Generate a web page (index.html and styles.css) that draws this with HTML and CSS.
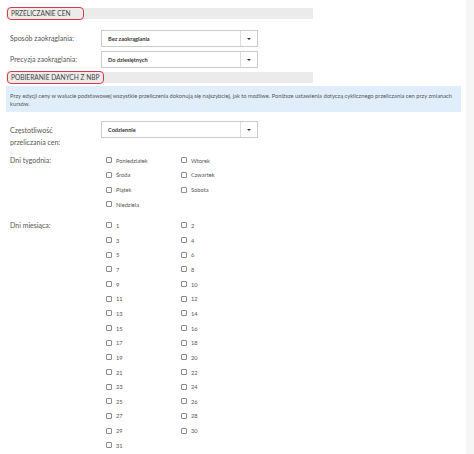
FILE: index.html
```html
<!DOCTYPE html>
<html lang="pl">

<head>
    <meta charset="UTF-8">
    <meta name="viewport" content="width=device-width, initial-scale=1.0">
    <title>Przeliczanie cen</title>
    <link rel="stylesheet" href="styles.css">
</head>

<body>

    <div class="page">
        <main class="panel">

            <div class="section-head head-first">
                <span class="section-title">Przeliczanie cen</span>
            </div>

            <div class="field-row row-first">
                <label class="field-label">Sposób zaokrąglania:</label>
                <div class="select">
                    <span class="select-value">Bez zaokrąglania</span>
                    <span class="select-arrow"><i></i></span>
                </div>
            </div>

            <div class="field-row row-next">
                <label class="field-label">Precyzja zaokrąglania:</label>
                <div class="select">
                    <span class="select-value">Do dziesiętnych</span>
                    <span class="select-arrow"><i></i></span>
                </div>
            </div>

            <div class="section-head head-second">
                <span class="section-title">Pobieranie danych z NBP</span>
            </div>

            <div class="info">
                Przy edycji ceny w walucie podstawowej wszystkie przeliczenia dokonują się najszybciej, jak to możliwe. Poniższe ustawienia dotyczą cyklicznego przeliczania cen przy zmianach kursów.
            </div>

            <div class="field-row row-freq">
                <label class="field-label label-wrap">Częstotliwość przeliczania cen:</label>
                <div class="select">
                    <span class="select-value">Codziennie</span>
                    <span class="select-arrow"><i></i></span>
                </div>
            </div>

            <div class="field-row row-week">
                <label class="field-label label-checks">Dni tygodnia:</label>
                <div class="checks">
                    <label class="check"><span class="box"></span>Poniedziałek</label>
                    <label class="check"><span class="box"></span>Wtorek</label>
                    <label class="check"><span class="box"></span>Środa</label>
                    <label class="check"><span class="box"></span>Czwartek</label>
                    <label class="check"><span class="box"></span>Piątek</label>
                    <label class="check"><span class="box"></span>Sobota</label>
                    <label class="check"><span class="box"></span>Niedziela</label>
                </div>
            </div>

            <div class="field-row row-month">
                <label class="field-label label-checks">Dni miesiąca:</label>
                <div class="checks" id="monthDays"></div>
            </div>

        </main>
        <div class="scroll-track"></div>
    </div>

    <script>
        // Days of the month, two per row
        const monthDays = document.getElementById('monthDays');
        for (let day = 1; day <= 31; day++) {
            const item = document.createElement('label');
            item.className = 'check';
            const box = document.createElement('span');
            box.className = 'box';
            item.appendChild(box);
            item.appendChild(document.createTextNode(day));
            monthDays.appendChild(item);
        }
    </script>

</body>

</html>
```

FILE: styles.css
```css
* {
    box-sizing: border-box;
}

body {
    font-family: 'Lato', 'Open Sans', sans-serif;
    margin: 0;
    padding: 0;
    background-color: #fff;
    color: #555;
    height: 454px;
    overflow: hidden;
}

.page {
    display: flex;
    height: 100%;
}

.panel {
    flex: 1;
    padding: 8px 5px 0 6px;
}

.scroll-track {
    width: 8px;
    background-color: #f6f6f6;
}

/* section headers */

.section-head {
    width: 307px;
    height: 11px;
    background-color: #ebebeb;
    display: flex;
    align-items: center;
}

.head-second {
    margin-top: 4px;
}

.section-title {
    margin-left: 2px;
    font-size: 6.6px;
    text-transform: uppercase;
    color: #444;
    padding: 0 4px 0 3px;
    line-height: 11px;
    border-radius: 3px;
    outline: 1.5px solid #d8384a;
    outline-offset: 0.5px;
}

.head-first .section-title {
    padding-right: 12px;
}

/* form rows */

.field-row {
    display: grid;
    grid-template-columns: 91px 157px;
    padding-left: 4px;
}

.row-first {
    margin-top: 11px;
}

.row-next {
    margin-top: 4px;
}

.row-freq {
    margin-top: 9px;
}

.row-week {
    margin-top: 5px;
}

.row-month {
    margin-top: 6.5px;
}

.field-label {
    font-size: 7px;
    line-height: 17px;
    color: #555;
}

.label-wrap {
    line-height: 12px;
    padding-top: 3px;
    padding-right: 30px;
}

.label-checks {
    line-height: 14.67px;
}

.select {
    height: 17px;
    border: 1px solid #cacaca;
    background-color: #fff;
    display: flex;
    align-items: center;
}

.select-value {
    flex: 1;
    font-size: 5.6px;
    font-weight: 700;
    color: #333;
    padding-left: 6px;
}

.select-arrow {
    width: 17px;
    height: 100%;
    border-left: 1px solid #dcdcdc;
    display: flex;
    align-items: center;
    justify-content: center;
}

.select-arrow i {
    width: 0;
    height: 0;
    border-left: 2px solid transparent;
    border-right: 2px solid transparent;
    border-top: 2.5px solid #333;
}

/* info box */

.info {
    margin-top: 3px;
    width: 455px;
    height: 26px;
    background-color: #e0eefc;
    font-size: 5.75px;
    line-height: 8px;
    color: #555;
    padding: 6px 4px 4px 4px;
}

/* checkboxes */

.checks {
    display: grid;
    grid-template-columns: 75px 75px;
    grid-auto-rows: 14.67px;
}

.check {
    display: flex;
    align-items: center;
    gap: 4px;
    padding-left: 5px;
    font-size: 5.7px;
    color: #555;
}

.box {
    width: 6px;
    height: 6px;
    border: 1px solid #8a8a8a;
    border-radius: 1px;
    background-color: #fff;
}
```
